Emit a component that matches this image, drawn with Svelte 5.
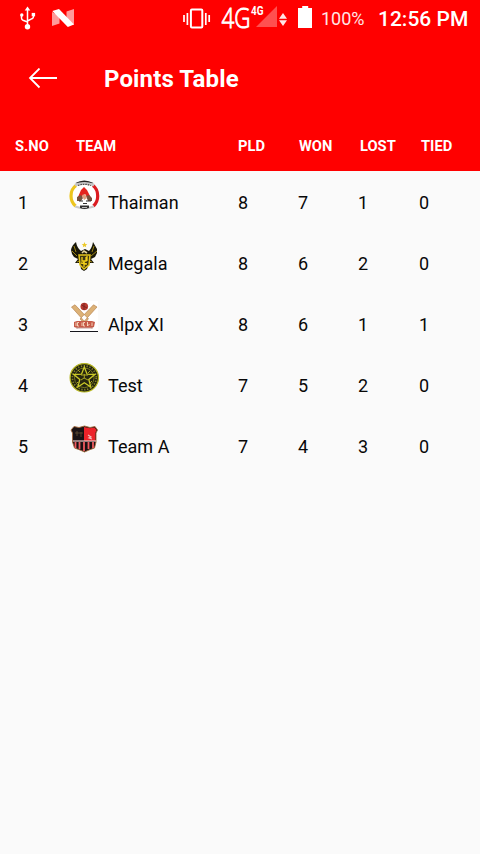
<script>
  const rows = [
    { name: 'Thaiman', stats: [8, 7, 1, 0] },
    { name: 'Megala', stats: [8, 6, 2, 0] },
    { name: 'Alpx XI', stats: [8, 6, 1, 1] },
    { name: 'Test', stats: [7, 5, 2, 0] },
    { name: 'Team A', stats: [7, 4, 3, 0] }
  ];
</script>

<div class="screen">
  <header>
    <div class="status">
      <svg class="left" width="80" height="37" viewBox="0 0 80 37">
        <g stroke="#fff" fill="none" stroke-width="1.5">
          <path d="M27.5 26V9M21.5 15V18Q21.5 19.5 23 20.2L27.5 22M33.5 14V16.5Q33.5 18 32 18.7L27.5 21" />
        </g>
        <path d="M27.5 6.5L30.3 10.5H24.7Z" fill="#fff" />
        <circle cx="27.5" cy="26.8" r="2.7" fill="#fff" />
        <circle cx="21.8" cy="15" r="1.7" fill="#fff" />
        <rect x="31.7" y="12.9" width="3.4" height="3.4" fill="#fff" />
        <path d="M52 12L59.5 16V23.5L52 26ZM66.5 11.5L74 9V25L66.5 20Z" fill="#ff9a9a" />
        <path d="M52.3 11L59 9L74 24.5L67.8 27Z" fill="#fff" />
      </svg>
      <svg class="right" width="134" height="37" viewBox="180 0 134 37">
        <rect x="190.9" y="9.6" width="11.4" height="17.9" rx="1" fill="none" stroke="#fff" stroke-width="2" />
        <path d="M184 15V22M187.4 13V25M205.8 13V25M209.2 15V22" stroke="#fff" stroke-width="1.7" />
        <text class="net" x="221.5" y="27.6" textLength="29" lengthAdjust="spacingAndGlyphs">4G</text>
        <path d="M256 27L277 6V27Z" fill="#ff5050" />
        <text class="mini" x="251" y="15.4" textLength="12.5" lengthAdjust="spacingAndGlyphs">4G</text>
        <path d="M283 13L287 18.7H279ZM283 26L279 20.3H287Z" fill="#ffe5e5" />
        <path d="M302.2 6H308.2V8H312V28H298V8H302.2Z" fill="#fff" />
      </svg>
      <span class="percent">100%</span>
      <span class="clock">12:56 PM</span>
    </div>
    <div class="bar">
      <svg width="30" height="22" viewBox="0 0 30 22">
        <path d="M29 10H2M11.5 .5L2 10L11.5 19.5" fill="none" stroke="#fff" stroke-width="1.8" />
      </svg>
      <h1>Points Table</h1>
    </div>
    <div class="head">
      <span>S.NO</span><span>TEAM</span><span>PLD</span><span>WON</span><span>LOST</span><span>TIED</span>
    </div>
  </header>

  <main>
    {#each rows as row, i}
      <div class="row">
        <span>{i + 1}</span>
        <svg class="logo" width="31" height="31" viewBox="0 0 31 31">
          {#if i === 0}
            <circle cx="15.5" cy="15.5" r="12" fill="#fff" />
            <path d="M7 5.5Q2 9 2 16Q2 22 6.5 26" fill="none" stroke="#edc51e" stroke-width="3.2" />
            <path d="M24 5.5Q28.7 9 28.7 16Q28.7 22 24.5 26" fill="none" stroke="#db1c21" stroke-width="3.2" />
            <path d="M6.5 3Q15 -2 24.5 3L22.5 4Q15 1 8.5 4Z" fill="#252525" />
            <path d="M6 5Q15 1.8 25 5" fill="none" stroke="#c6c6c6" stroke-width="2.6" />
            <path d="M9 5.5Q15 3 22 5.5" fill="none" stroke="#444" stroke-width="1.2" stroke-dasharray="1.5 1" />
            <path d="M6 26.5Q15 30 25 26.5" fill="none" stroke="#c9c9c9" stroke-width="2.2" />
            <path d="M11 28Q15.5 30 20 28V25.5H11Z" fill="#303030" />
            <path d="M12 10L15 7L18 10L22 18L18 17L16 14L12 18L9 17Z" fill="#e4231e" />
            <path d="M8 17L12 15L14 18L12 21H8ZM17 16L20 15L23 18V21H19Z" fill="#78513e" />
            <path d="M13 15L16 14L18 18L15 20Z" fill="#e2a080" />
            <path d="M10 21H14M17 21H22M14 23.5H18" stroke="#333" />
            <path d="M13 27.5H18" stroke="#ddd" stroke-width=".8" />
          {:else if i === 1}
            <path d="M15.5 1L16.3 3L18.3 3.2L16.8 4.5L17.2 6.2L15.5 5.2L13.8 6.2L14.2 4.5L12.7 3.2L14.7 3Z" fill="#ecc92b" />
            <path d="M7 1Q3 4 2 9L3 13L5 16L9 18L6 22L11 22L12 28L15 30L18 28L20 22L25 22L22 18L26 16L28 12L28 8L24 1Q23 7 20 10L16 8L12 10Q8 7 7 1Z" fill="#191708" />
            <path d="M5 5L7 11M3 10L8 15M25 5L23 11M28 10L22 15M8 21L11 20M23 21L20 20" fill="none" stroke="#a99014" stroke-width=".9" />
            <path d="M10 14H21L20 24L15 28L11 24Z" fill="#403711" stroke="#e3c41d" stroke-width="1.5" />
            <path d="M13 16V20H17V16M18 15V20M12 22L18 23M15 20V26" fill="none" stroke="#f1cf1b" stroke-width="1.3" />
            <path d="M13 12L15 10L18 12" fill="none" stroke="#e4d29a" stroke-width="1.6" />
          {:else if i === 2}
            <rect x="1" y="-1" width="28" height="30" fill="#fff" />
            <circle cx="15.3" cy="4.5" r="3.8" fill="#b83b31" />
            <path d="M12.5 3L18 6M15 1V8" stroke="#7e2421" />
            <path d="M18 19L23 26M13 19L8 26" stroke="#b67749" stroke-width="2" />
            <path d="M2.5 5L6 2.8L19.5 17L16 20ZM28 5L24.5 2.8L11 17L14.5 20Z" fill="#ddb277" stroke="#b98755" stroke-width=".7" />
            <path d="M5 20L8 19H23L26 20L25 25L22 26H8L5 25Z" fill="#c75b48" />
            <path d="M7 20.5V24M10 20.5H8.5V24H10M13 20.5V24M16 20.5H14.5V24H16M18.5 20V24L20.5 22M23 20.5V24" fill="none" stroke="#fff0d6" stroke-width=".8" />
            <path d="M7 26H24" stroke="#c7a09a" stroke-width="1" />
            <path d="M1 29.5H29" stroke="#15151c" stroke-width="1" />
          {:else if i === 3}
            <circle cx="15.3" cy="14.8" r="14.2" fill="#22220f" stroke="#b6b61f" stroke-width="1.2" />
            <circle cx="15.3" cy="14.8" r="11.9" fill="none" stroke="#88872a" stroke-width="1.7" stroke-dasharray="1.3 1.6" />
            <circle cx="15.3" cy="14.8" r="9.8" fill="none" stroke="#77771f" stroke-width="1" />
            <path d="M15.3 4L18.1 11.2L25.8 11.6L19.8 16.5L21.8 24L15.3 19.7L8.8 24L10.8 16.5L4.8 11.6L12.5 11.2Z" fill="#28270f" stroke="#cbca28" stroke-width="1.3" />
            <path d="M12 12H19M15.3 11V15M12 17L15 15L19 17M9 7L11 9M21 8L19 10M8 19L10 21M21 20L23 18" fill="none" stroke="#aaa724" />
          {:else}
            <path d="M5 2.5L10 3.5L15.5 2L21 3.5L26 2.5L28.5 6L27 9V18L25.5 24L20 26L15.5 28L11 26L5.5 24L3.5 18V9L2 6Z" fill="#1a1214" stroke="#a56a3c" stroke-width=".9" />
            <path d="M15 3L21 4.2L25.5 3.4L27.5 6L26.3 9V17H15Z" fill="#ed2329" />
            <path d="M6 9H14M8 7V12M12 8V13" stroke="#665033" stroke-width=".8" />
            <path d="M19 11L22 13L20 14L23 15" fill="none" stroke="#f3c2bd" stroke-width="1.2" />
            <path d="M6.5 18V24M10.5 18V25M15 18V27M19.5 18V25M24 18V24" stroke="#f05a5e" stroke-width="1.8" />
            <path d="M4 17H27" stroke="#f0c7c4" stroke-width="1.2" />
          {/if}
        </svg>
        <span>{row.name}</span>
        {#each row.stats as value}<span>{value}</span>{/each}
      </div>
    {/each}
  </main>
</div>

<style>
  :global(body) { margin: 0; background: #fafafa; }
  .screen { width: 480px; height: 854px; overflow: hidden; background: #fafafa; font-family: Roboto, sans-serif; color: #080808; }
  header { height: 171px; background: #f00; color: #fff; }
  .status { display: flex; height: 37px; }
  .status svg, .bar svg, .logo { display: block; flex: none; }
  .right { margin-left: 100px; overflow: visible; }
  .net { font: 300 27px "Open Sans", sans-serif; fill: #fff; stroke: #fff; stroke-width: .9; }
  .mini { font: bold 12px Roboto, sans-serif; fill: #fff; }
  .percent { width: 57px; margin-left: 7px; font-size: 18px; line-height: 38px; color: #ffe5e5; }
  .clock { font-size: 21px; font-weight: 500; line-height: 38px; white-space: nowrap; }
  .bar { display: flex; align-items: center; height: 84px; padding-left: 28px; box-sizing: border-box; }
  h1 { margin: 0 0 0 46px; font-size: 24px; font-weight: 700; line-height: 28px; letter-spacing: .13px; }
  .head { display: grid; grid-template-columns: 61px 162px 61px 61px 61px 1fr; padding-left: 15px; font-size: 14.7px; font-weight: 700; line-height: 50px; }
  .row { display: grid; grid-template-columns: 51px 39px 130px 60px 60px 61px 1fr; height: 61px; padding-left: 18px; font-size: 18px; line-height: 63px; letter-spacing: .04px; }
  .logo { margin-top: 9px; overflow: visible; }
</style>
